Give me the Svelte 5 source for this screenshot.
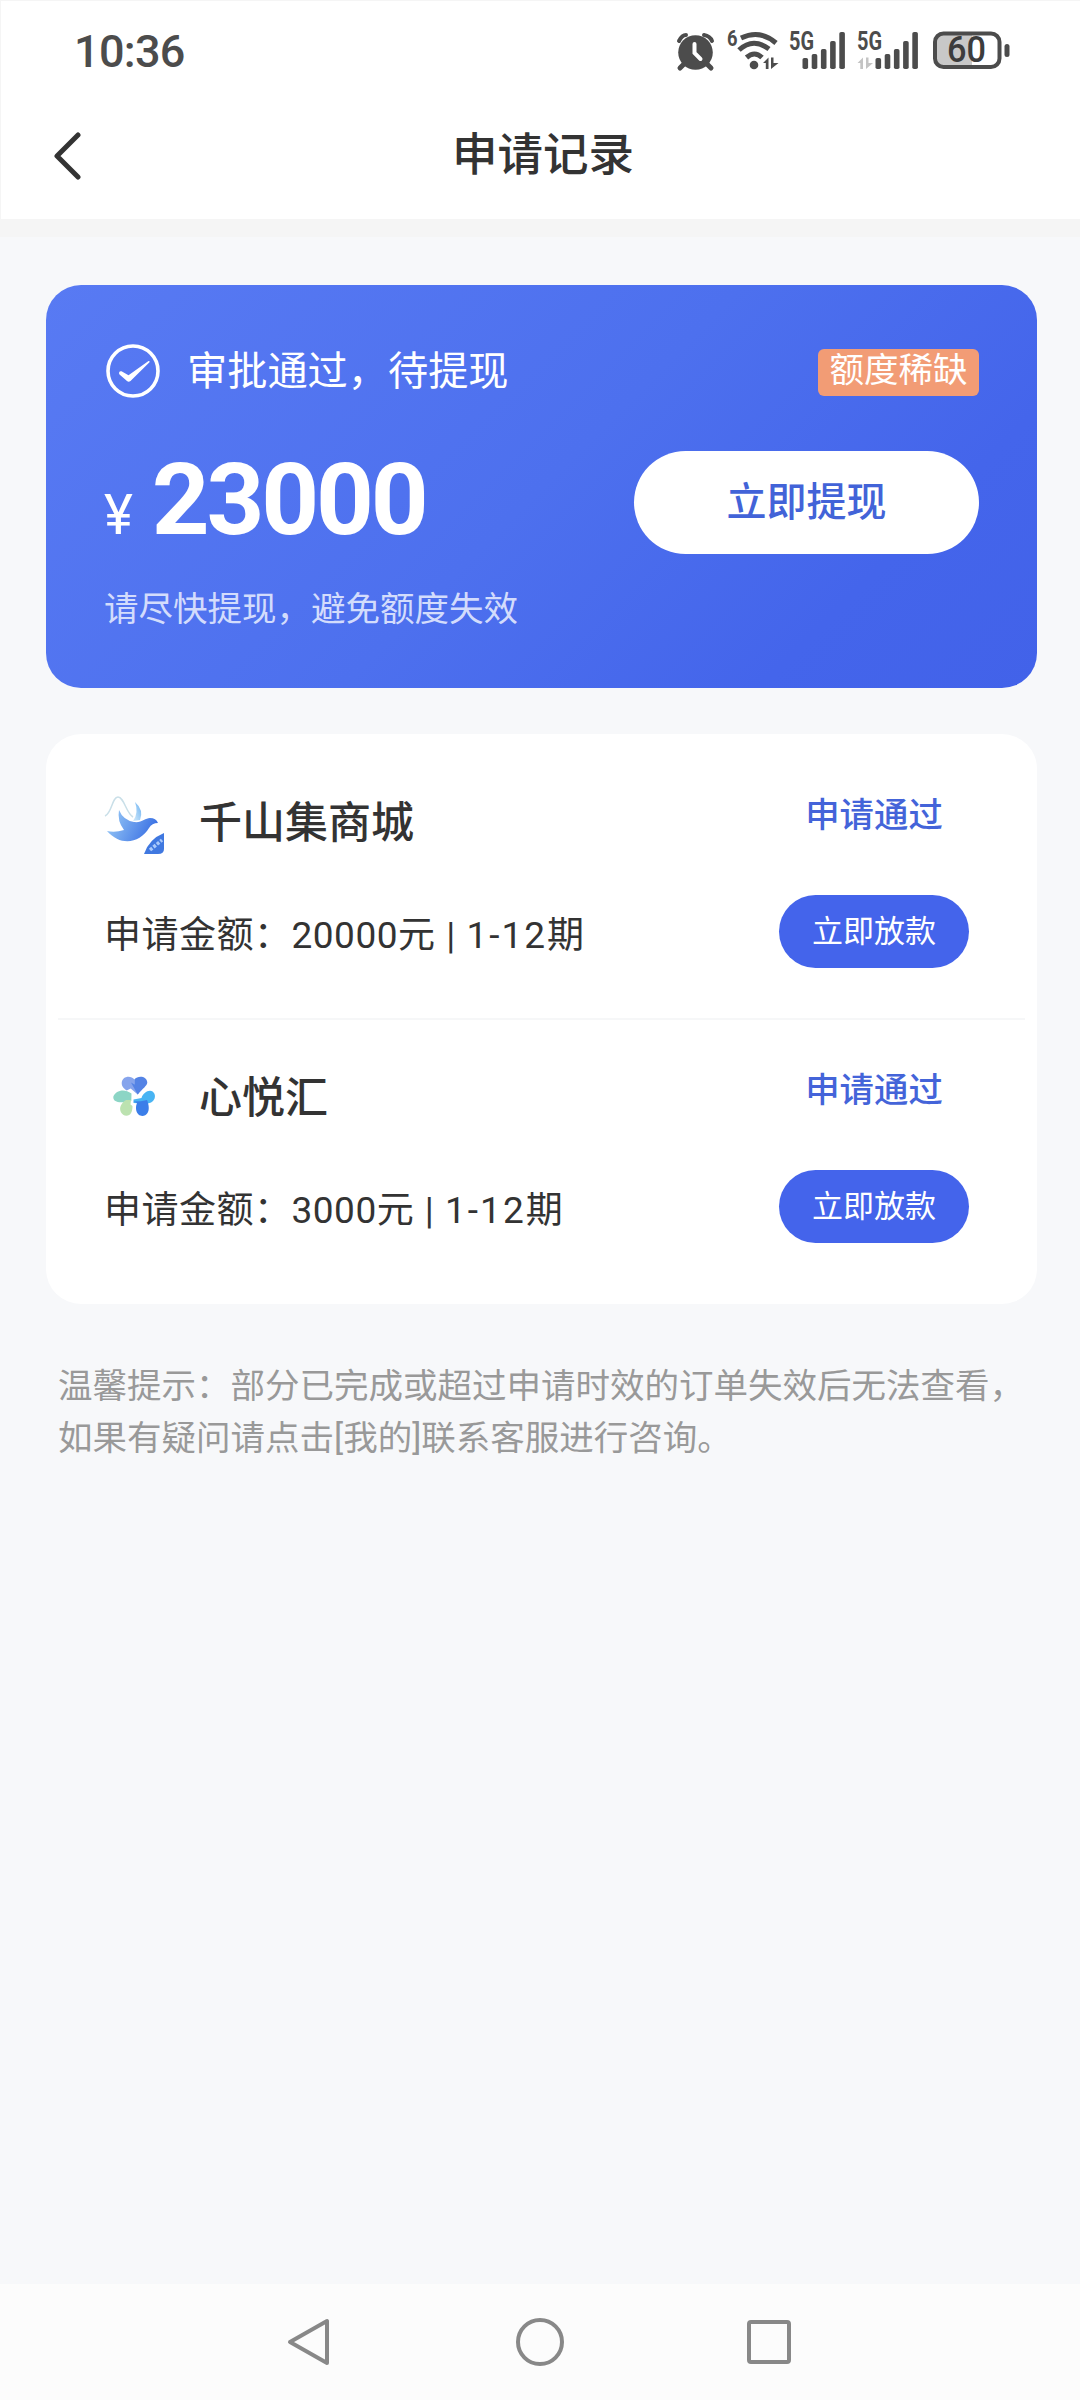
<script>
  const orders = [
    { name: '千山集商城', logo: 'bird', amount: '20000', term: '1-12期' },
    { name: '心悦汇', logo: 'hearts', amount: '3000', term: '1-12期' }
  ];

  const signals = [
    { x: 789, arrows: false },
    { x: 857, arrows: true }
  ];
  // top edge of each signal bar, shortest first
  const barTops = [58, 54, 49, 41, 32];
</script>

<div class="screen">
  <div class="top">
    <div class="statusbar">
      <span class="time">10:36</span>
      <svg class="tray" viewBox="670 27 340 46" width="340" height="46">
        <g fill="none" stroke="#4c4c4c" stroke-linecap="round">
          <path d="M679 41q3-6 7-6M704 35q6 1 8 6" stroke-width="4" />
          <path d="M685 63l-5 5M706 63l5 5" stroke-width="5" />
        </g>
        <circle cx="695.5" cy="52.5" r="17.3" fill="#4c4c4c" />
        <path d="M694.5 44v9l6 6" fill="none" stroke="#fff" stroke-width="4" stroke-linecap="round" />

        <text x="727" y="46" class="tiny" font-size="22" textLength="10.500" lengthAdjust="spacingAndGlyphs">6</text>
        <g fill="none" stroke="#4c4c4c" stroke-width="5">
          <path d="M741 38q19-9 35 5" />
          <path d="M739 50q14-13 30-1" />
          <path d="M746.500 57.500q8-7 15.500 0" />
        </g>
        <circle cx="754" cy="65" r="4.300" fill="#4c4c4c" />
        <path d="M763 63l5.500-5.500v11.500h-2.700v-6zM771 57.500h2.500v5.500h5l-7.500 6z" fill="#4c4c4c" />

        {#each signals as s (s.x)}
          <text x={s.x} y="50" class="tiny" font-size="25" textLength="25" lengthAdjust="spacingAndGlyphs">5G</text>
          {#each barTops as top, i}
            <rect
              x={s.x + (s.arrows ? 18.5 : 13.5) + i * 9.2}
              y={top}
              width="5.600"
              height={69 - top}
              rx="1.800"
              fill="#4c4c4c"
            />
          {/each}
          {#if s.arrows}
            <path d="M857.500 63l5.500-5.500v11.500h-2.700v-6zM866 57.500h2.500v5.500h4.500l-7 6z" fill="#c4c4c4" />
          {/if}
        {/each}

        <path d="M943 34h29v33h-29a8 8 0 0 1-8-8v-17a8 8 0 0 1 8-8z" fill="#c8c8c8" />
        <rect x="935" y="33.500" width="64.500" height="33.500" rx="8.500" fill="none" stroke="#4c4c4c" stroke-width="4" />
        <rect x="1004.500" y="44" width="5" height="13" rx="2.500" fill="#4c4c4c" />
        <text x="947" y="62" class="charge" textLength="39" lengthAdjust="spacingAndGlyphs">60</text>
      </svg>
    </div>
    <header>
      <svg class="back" viewBox="0 0 28 48" width="28" height="48">
        <path d="M25 3L4 24l21 21" />
      </svg>
      <h1>申请记录</h1>
    </header>
  </div>

  <main>
    <section class="quota">
      <div class="row">
        <svg class="check" viewBox="0 0 54 54" width="54" height="54">
          <circle cx="27" cy="27" r="25" fill="none" stroke="#fff" stroke-width="3.600" />
          <path d="M13 29.300q0-2.600 2.500-2l7 4L42.500 17q1.500-.5 1 1.300L24.500 37q-2 1.500-3.500 0l-7.500-6.500z" fill="#fff" />
        </svg>
        <span class="state">审批通过，待提现</span>
        <span class="tag">额度稀缺</span>
      </div>
      <div class="row money">
        <div class="amount"><span>¥</span>23000</div>
        <button class="withdraw">立即提现</button>
      </div>
      <p>请尽快提现，避免额度失效</p>
    </section>

    <section class="list">
      {#each orders as order (order.name)}
        <article>
          <div class="info">
            <div class="shop">
              {#if order.logo === 'bird'}
                <svg viewBox="0 0 60 62" width="60" height="62">
                  <defs>
                    <linearGradient id="wing" x1="0" y1="0" x2="1" y2="0.3">
                      <stop offset="0" stop-color="#9fd0f8" />
                      <stop offset="1" stop-color="#3e74e4" />
                    </linearGradient>
                    <linearGradient id="tip" x1="0" y1="1" x2="1" y2="0">
                      <stop offset="0" stop-color="#d4ebfb" />
                      <stop offset="1" stop-color="#6db2f1" />
                    </linearGradient>
                  </defs>
                  <path d="M1 24C8 21 8 5 14 5s8 16 15 20" fill="none" stroke="#c9dfe8" stroke-width="1.500" />
                  <path d="M31 10q9 8 5 18l-7 1q6-8 2-19z" fill="url(#tip)" />
                  <path d="M15 18q4 10 15 12c8 1 11-4 16-4q6 0 8 5-6 0-9 5c-9 15-28 19-42 3q8 2 17-1-7-9-5-20z" fill="url(#wing)" />
                  <path d="M60 41v16q0 5-6 5H40q5-15 20-21z" fill="#4078e0" />
                  <path d="M46 58l12-10" fill="none" stroke="#a9c9fa" stroke-width="3.500" stroke-dasharray="3 1.500" />
                </svg>
              {:else}
                <svg viewBox="0 0 60 62" width="60" height="62">
                  <path d="M30.300 12.500C27 8 18 9 17.700 16c0 4 3 6 5 7.500l4-2 7 6 3-4-6.400-5z" fill="#86a4ec" />
                  <path d="M30.300 12.500C34 8 43 9 43.300 15.500c-.3 3.500-4.300 5.500-9.600 12L27 15.500l3.300 2z" fill="#5483e5" />
                  <path d="M27.500 26.500c-4-3-8-3.500-11-2.800-4 1-7.200 4-7.200 6.800 0 4 5 5.500 11 4.500l7-1z" fill="#8cd5c5" />
                  <path d="M27 33l-.5 4.500 2 1.500c0 6-2 9.700-6 9.700-5 0-8-6-5.500-10.500 1-2 3-4 5-5.200z" fill="#bce2b0" />
                  <path d="M29.500 32.500l8-1.500c1-4 5-7.300 8.500-7.300 4 .3 6 4.300 4.500 8-1.500 3.300-5 4.800-8 5l-13-.7z" fill="#48b4f3" />
                  <path d="M29.500 34.500q8 0 13.500-1.500c2 5 2.500 10 .5 13-2 3-6 4-9 1.500-3-3-3-8-1.500-11.500z" fill="#3b7ee9" />
                </svg>
              {/if}
              <h2>{order.name}</h2>
            </div>
            <div class="detail">申请金额：{order.amount}元 | <span>{order.term}</span></div>
          </div>
          <div class="action">
            <span>申请通过</span>
            <button>立即放款</button>
          </div>
        </article>
      {/each}
    </section>

    <p class="notice">温馨提示：部分已完成或超过申请时效的订单失效后无法查看，<br />如果有疑问请点击[我的]联系客服进行咨询。</p>
  </main>

  <nav>
    <svg viewBox="0 0 50 50" width="50" height="50"><path d="M41 4v42L4 25z" /></svg>
    <svg viewBox="0 0 50 50" width="50" height="50"><circle cx="25" cy="25" r="22" /></svg>
    <svg viewBox="0 0 50 50" width="50" height="50"><rect x="5" y="5" width="40" height="40" rx="2" /></svg>
  </nav>
</div>

<style>
  :global(body) {
    margin: 0;
  }
  .screen {
    box-sizing: border-box;
    width: 1080px;
    height: 2400px;
    display: flex;
    flex-direction: column;
    background: #f7f8fa;
    color: #333;
    font-family: Roboto, 'Noto Sans CJK SC', sans-serif;
  }
  h1,
  h2,
  p {
    margin: 0;
    font-weight: 500;
  }
  button {
    padding: 0;
    border: 0;
    font: inherit;
  }
  svg {
    display: block;
    flex: none;
  }
  .top {
    box-sizing: border-box;
    height: 237px;
    background: #fff;
    border: solid #f5f5f5;
    border-width: 1px 0 18px 1px;
  }
  .statusbar {
    display: flex;
    justify-content: space-between;
    padding: 26px 70px 0 73px;
    height: 46px;
  }
  .time {
    font-size: 45px;
    font-weight: 500;
    line-height: 50px;
    letter-spacing: -0.7px;
    color: #4c4c4c;
  }
  .tiny {
    font-weight: 700;
    fill: #4c4c4c;
  }
  .charge {
    font-size: 36px;
    font-weight: 500;
    fill: #3c3c3c;
  }
  header {
    display: grid;
    grid-template-columns: 100px 1fr 95px;
    align-items: center;
    height: 146px;
    padding-top: 19px;
    box-sizing: border-box;
  }
  .back {
    margin-left: 52px;
    fill: none;
    stroke: #333;
    stroke-width: 5;
    stroke-linecap: round;
    stroke-linejoin: round;
  }
  h1 {
    text-align: center;
    font-size: 45.5px;
    line-height: 60px;
  }
  main {
    flex: 1;
    padding: 48px 43px 0 46px;
  }
  .quota {
    box-sizing: border-box;
    height: 403px;
    padding: 59px 58px 0;
    border-radius: 35px;
    background: linear-gradient(135deg, #587af3 0%, #4d70ee 50%, #4465eb 80%, #4262e9 100%);
    color: #fff;
  }
  .row {
    display: flex;
    align-items: center;
    height: 54px;
  }
  .check {
    margin-left: 2px;
  }
  .state {
    flex: 1;
    margin-left: 27px;
    font-size: 40.2px;
    line-height: 54px;
    padding-top: 2px;
  }
  .tag {
    width: 161px;
    height: 47px;
    margin-top: 3px;
    border-radius: 6px;
    background: #f29c75;
    font-size: 34.5px;
    line-height: 43px;
    text-align: center;
  }
  .money {
    justify-content: space-between;
    align-items: flex-start;
    height: 103px;
    margin-top: 53px;
  }
  .amount {
    font-size: 101px;
    font-weight: 700;
    line-height: 98px;
    letter-spacing: -3.2px;
  }
  .amount span {
    margin-right: 22px;
    font-size: 55px;
    font-weight: 400;
    line-height: 1;
  }
  .withdraw {
    width: 345px;
    height: 103px;
    padding-bottom: 8px;
    border-radius: 52px;
    background: #fff;
    color: #4263d8;
    font-size: 40px;
    font-weight: 500;
  }
  .quota p {
    margin-top: 30px;
    font-size: 34.5px;
    font-weight: 400;
    line-height: 50px;
    color: #d3dcfc;
  }
  .list {
    box-sizing: border-box;
    height: 570px;
    margin-top: 46px;
    padding: 11px 12px;
    border-radius: 35px;
    background: #fff;
  }
  article {
    display: flex;
    justify-content: space-between;
    height: 273px;
    padding: 0 56px 0 46px;
  }
  article + article {
    border-top: 2px solid #f6f7f8;
  }
  .info {
    padding-top: 47px;
  }
  .shop {
    display: flex;
    align-items: center;
    gap: 35px;
  }
  h2 {
    font-size: 43px;
    line-height: 60px;
  }
  .detail {
    margin-top: 57px;
    font-size: 37px;
    line-height: 50px;
    letter-spacing: 0.5px;
    word-spacing: 1px;
  }
  .detail span {
    letter-spacing: 2px;
  }
  .action {
    width: 190px;
    display: flex;
    flex-direction: column;
    align-items: center;
    gap: 60px;
    padding-top: 50px;
  }
  .action span {
    color: #4464d9;
    font-size: 34.4px;
    font-weight: 500;
    line-height: 40px;
  }
  .action button {
    width: 190px;
    height: 73px;
    padding-bottom: 6px;
    border-radius: 37px;
    background: #4464eb;
    color: #fff;
    font-size: 31px;
  }
  .notice {
    margin-top: 56px;
    padding-left: 12px;
    font-size: 34.5px;
    font-weight: 400;
    line-height: 52px;
    color: #999;
    white-space: nowrap;
  }
  nav {
    display: flex;
    justify-content: center;
    align-items: center;
    gap: 179px;
    height: 116px;
    background: #fcfcfc;
  }
  nav svg {
    fill: none;
    stroke: #888;
    stroke-width: 4;
    stroke-linejoin: round;
  }
</style>
